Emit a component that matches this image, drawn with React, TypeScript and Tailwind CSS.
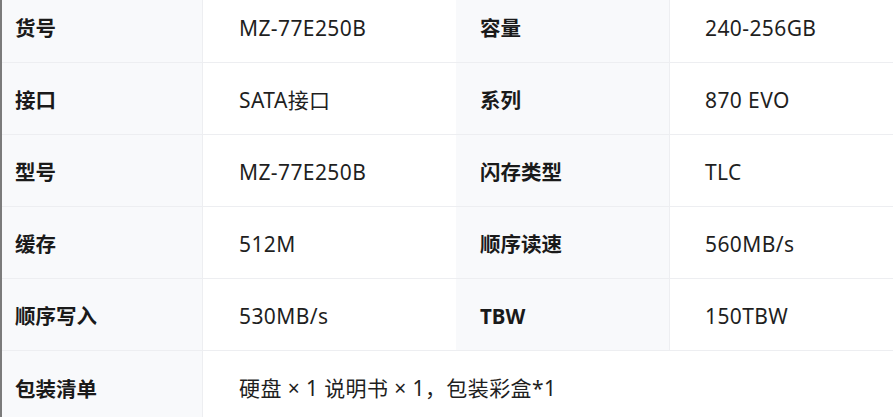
const rows: [string, string, string?, string?][] = [
  ["货号", "MZ-77E250B", "容量", "240-256GB"],
  ["接口", "SATA接口", "系列", "870 EVO"],
  ["型号", "MZ-77E250B", "闪存类型", "TLC"],
  ["缓存", "512M", "顺序读速", "560MB/s"],
  ["顺序写入", "530MB/s", "TBW", "150TBW"],
  ["包装清单", "硬盘 × 1 说明书 × 1，包装彩盒*1"],
];

const font = { fontFamily: '"Noto Sans", "Noto Sans CJK SC", sans-serif' };

export default function App() {
  return (
    <div className="h-[417px] w-[893px] overflow-hidden bg-white" style={font}>
      <div className="-mt-[9px] flex border-l-2 border-[#7b7b7b]">
        <div className="flex-1">
          {rows.map(([l1, v1, l2, v2], i) => (
            <div
              key={i}
              className={`grid h-[72px] ${
                l2 ? "grid-cols-[201px_253px_214px_1fr]" : "grid-cols-[201px_1fr]"
              } ${i < rows.length - 1 ? "border-b border-[#edeef1]" : ""}`}
            >
              <div className="flex items-center border-r border-[#edeef1] bg-[#f8f9fb] pl-[13px] pt-[4px] text-[20.5px] font-bold text-[#1a1a1a]">
                {l1}
              </div>
              <div className="flex items-center pl-[36px] pt-[4px] text-[21px] tracking-[0.4px] text-[#1f1f1f]">
                {v1}
              </div>
              {l2 && (
                <>
                  <div className="flex items-center border-r border-[#edeef1] bg-[#f8f9fb] pl-[24px] pt-[4px] text-[20.5px] font-bold text-[#1a1a1a]">
                    {l2}
                  </div>
                  <div className="flex items-center pl-[35px] pt-[4px] text-[21px] tracking-[0.4px] text-[#1f1f1f]">
                    {v2}
                  </div>
                </>
              )}
            </div>
          ))}
        </div>
      </div>
    </div>
  );
}
